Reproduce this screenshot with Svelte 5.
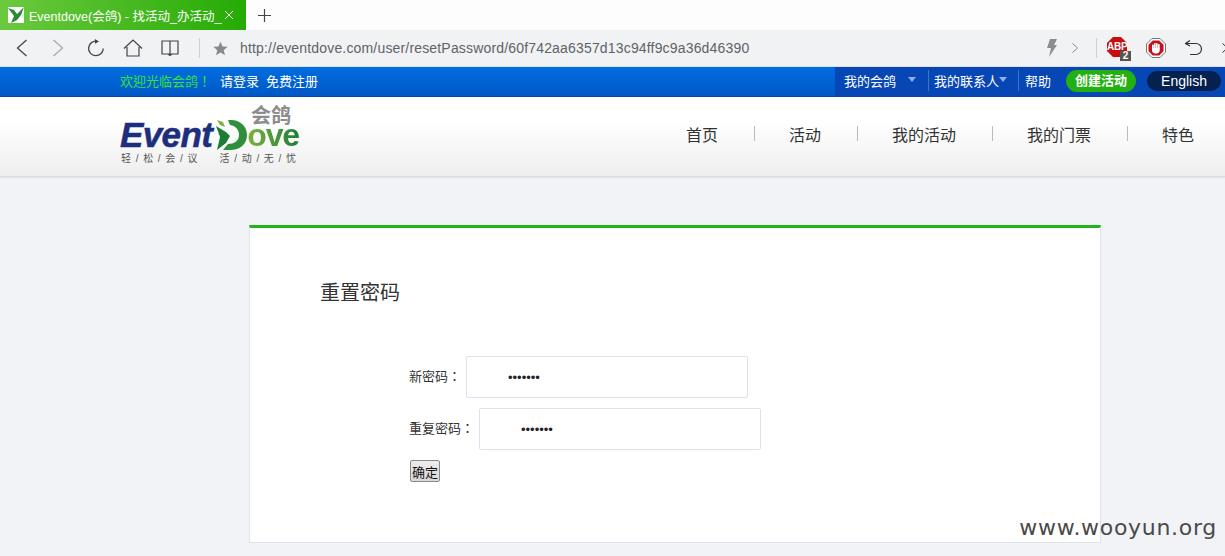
<script>
  const navItems = ['首页', '活动', '我的活动', '我的门票', '特色'];
  const url = 'http://eventdove.com/user/resetPassword/60f742aa6357d13c94ff9c9a36d46390';
</script>

<div class="page">
  <!-- browser chrome -->
  <div class="tabstrip">
    <div class="tab">
      <svg class="favicon" width="16" height="16" viewBox="0 0 16 16">
        <rect width="16" height="16" fill="#fff" />
        <path d="M0 1 L6 3 L9 7 L16 0 L13 8 L9 13 L3 16 L6 9 Z" fill="#2a8a35" />
      </svg>
      <span class="tab-title">Eventdove(会鸽) - 找活动_办活动_</span>
      <svg class="tab-close" width="10" height="10" viewBox="0 0 10 10">
        <path d="M1 1 L9 9 M9 1 L1 9" stroke="#fff" stroke-width="1" />
      </svg>
    </div>
    <svg class="newtab" width="15" height="15" viewBox="0 0 15 15">
      <path d="M7.5 1 V14 M1 7.5 H14" stroke="#444" stroke-width="1.2" />
    </svg>
  </div>

  <div class="toolbar">
    <div class="tools-left">
      <svg width="12" height="18" viewBox="0 0 12 18"><path d="M10.5 1 L1.5 9 L10.5 17" fill="none" stroke="#444" stroke-width="1.3" /></svg>
      <svg class="fwd" width="12" height="18" viewBox="0 0 12 18"><path d="M1.5 1 L10.5 9 L1.5 17" fill="none" stroke="#aaa" stroke-width="1.3" /></svg>
      <svg class="reload" width="18" height="18" viewBox="0 0 18 18"><path d="M10 2.2 A7.3 7.3 0 1 0 16.2 9.5" fill="none" stroke="#444" stroke-width="1.3" /><path d="M7.8 0 L12 2.4 L8 4.8 Z" fill="#444" /></svg>
      <svg class="home" width="20" height="18" viewBox="0 0 20 18"><path d="M1 9.5 L10 1 L19 9.5 M4 8 V17 H16 V8" fill="none" stroke="#444" stroke-width="1.2" /></svg>
      <svg class="book" width="18" height="16" viewBox="0 0 18 16"><path d="M1 1 H9 V14 H1 Z M9 1 H17 V14 H9 M7 14 L9 15.5 L11 14" fill="none" stroke="#444" stroke-width="1.2" /></svg>
      <span class="sep"></span>
      <svg class="star" width="15" height="15" viewBox="0 0 20 20"><path d="M10 1 L12.7 7.2 L19.5 7.8 L14.3 12.2 L16 19 L10 15.4 L4 19 L5.7 12.2 L0.5 7.8 L7.3 7.2 Z" fill="#8a8a8a" /></svg>
      <span class="url">{url}</span>
    </div>
    <div class="tools-right">
      <svg class="bolt" width="10" height="18" viewBox="0 0 10 18"><path d="M3 0 H10 L7 6 H10 L2 18 L4 9 H0 Z" fill="#8c8c8c" /></svg>
      <svg class="more" width="6" height="10" viewBox="0 0 6 10"><path d="M0.5 0.5 L5.5 5 L0.5 9.5" fill="none" stroke="#888" stroke-width="1" /></svg>
      <span class="sep right-sep"></span>
      <div class="abp">
        <svg width="20" height="20" viewBox="0 0 20 20"><path d="M6 0 H14 L20 6 V14 L14 20 H6 L0 14 V6 Z" fill="#c70d0d" /></svg>
        <span class="abp-text">ABP</span>
        <span class="abp-count">2</span>
      </div>
      <svg class="stop" width="20" height="20" viewBox="0 0 20 20">
        <path d="M6 0.5 H14 L19.5 6 V14 L14 19.5 H6 L0.5 14 V6 Z" fill="#fff" stroke="#777" stroke-width="1" />
        <path d="M6.8 2.5 H13.2 L17.5 6.8 V13.2 L13.2 17.5 H6.8 L2.5 13.2 V6.8 Z" fill="#c9101a" />
        <g fill="#fff">
          <rect x="6" y="6.5" width="1.7" height="6" rx="0.8" />
          <rect x="8" y="5" width="1.7" height="6" rx="0.8" />
          <rect x="10" y="5" width="1.7" height="6" rx="0.8" />
          <rect x="12" y="6" width="1.7" height="6" rx="0.8" />
          <path d="M6 10 H13.7 V12 C13.7 14 12.5 15.5 10.5 15.5 H9 C7.5 15.5 6.6 14.6 6 13 Z" />
        </g>
      </svg>
      <svg class="undo" width="18" height="16" viewBox="0 0 18 16"><path d="M1 3.5 H11 A5.5 5.5 0 0 1 11 14.5 H5" fill="none" stroke="#333" stroke-width="1.2" /><path d="M5 0.5 L0.5 3.5 L5 6" fill="none" stroke="#333" stroke-width="1.2" /></svg>
      <svg class="cut" width="6" height="10" viewBox="0 0 6 10"><path d="M0.5 0.5 L5.5 5 L0.5 9.5" fill="none" stroke="#333" stroke-width="1" /></svg>
    </div>
  </div>

  <!-- site top bar -->
  <div class="topbar">
    <div class="top-left">
      <span class="welcome">欢迎光临会鸽！</span>
      <a href="#login">请登录</a>
      <a href="#register">免费注册</a>
    </div>
    <div class="top-right">
      <a class="my" href="#my">我的会鸽<i class="caret"></i></a>
      <span class="top-sep"></span>
      <a class="contacts" href="#contacts">我的联系人<i class="caret small"></i></a>
      <span class="top-sep"></span>
      <a class="help" href="#help">帮助</a>
      <a class="create" href="#create">创建活动</a>
      <span class="english-wrap"><a class="english" href="#en">English</a></span>
    </div>
  </div>

  <!-- logo + nav -->
  <header class="site-head">
    <div class="logo">
      <span class="logo-cn">会鸽</span>
      <div class="logo-word">
        <span class="l-event">Event</span><svg class="l-d" width="31" height="32" viewBox="0 0 31 32">
          <path d="M12 1 H15 C25 1 31 8 31 16 C31 25 24 31 14 31 H7 L12 25 C18 25 23 22 23 16 C23 11 20 7 14 6 Z" fill="#2f8f3a" />
          <path d="M0 7 L10 13 L14 17 L10 24 L1 31 L4 18 Z" fill="#1c7d37" />
          <path d="M1 1 L7 3 L9 8 L4 6 Z" fill="#7db342" />
        </svg><span class="l-ove">ove</span>
      </div>
      <div class="logo-tag"><span>轻 / 松 / 会 / 议</span><span>活 / 动 / 无 / 忧</span></div>
    </div>
    <nav class="nav">
      {#each navItems as item, i}
        {#if i > 0}<span class="nav-sep"></span>{/if}
        <a href="#nav">{item}</a>
      {/each}
    </nav>
  </header>

  <main class="content">
    <section class="card">
      <h2>重置密码</h2>
      <form class="form" onsubmit={(e) => e.preventDefault()}>
        <div class="row">
          <label for="pw1">新密码：</label>
          <input id="pw1" type="password" value="1234567" />
        </div>
        <div class="row">
          <label for="pw2">重复密码：</label>
          <input id="pw2" type="password" value="1234567" />
        </div>
        <button type="submit">确定</button>
      </form>
    </section>
  </main>

  <span class="watermark">www.wooyun.org</span>
</div>

<style>
  :global(body) { margin: 0; background: #f2f3f7; }

  .page {
    position: relative;
    width: 1225px;
    height: 556px;
    overflow: hidden;
    background: #f2f3f7;
    font-family: "Liberation Sans", "Noto Sans CJK SC", sans-serif;
    text-spacing-trim: space-all;
  }

  .tabstrip { height: 30px; background: #fdfdfd; display: flex; align-items: center; }
  .tab {
    width: 246px;
    height: 30px;
    box-sizing: border-box;
    padding-left: 8px;
    display: flex;
    align-items: center;
    background: linear-gradient(90deg, #6cc93f, #25ab05);
    color: #fff;
    font-size: 12.5px;
  }
  .favicon { flex: none; }
  .tab-title { margin-left: 5px; white-space: nowrap; width: 191px; }
  .tab-close { margin-left: 4px; flex: none; }
  .newtab { margin-left: 11px; }

  .toolbar {
    height: 37px;
    box-sizing: border-box;
    background: #f1f2f4;
    border-bottom: 1px solid #dfe0e2;
    display: flex;
    align-items: center;
    justify-content: space-between;
    padding-left: 16px;
  }
  .tools-left, .tools-right { display: flex; align-items: center; }
  .fwd { margin-left: 24px; }
  .reload { margin-left: 23px; }
  .home { margin-left: 18px; }
  .book { margin-left: 18px; }
  .sep { width: 1px; height: 20px; background: #cfd0d2; }
  .tools-left .sep { margin-left: 20px; }
  .star { margin-left: 13px; }
  .url { margin-left: 12px; font-size: 14px; color: #5f6368; letter-spacing: 0.17px; white-space: nowrap; }

  .bolt { margin-right: 15px; }
  .more { margin-right: 18px; }
  .right-sep { margin-right: 10px; }
  .abp { position: relative; width: 20px; height: 20px; margin-right: 19px; margin-bottom: 3px; }
  .abp svg { display: block; }
  .abp-text {
    position: absolute;
    left: 0;
    top: 4px;
    width: 20px;
    text-align: center;
    color: #fff;
    font-size: 10px;
    font-weight: 700;
    letter-spacing: -0.2px;
    line-height: 12px;
  }
  .abp-count {
    position: absolute;
    right: -4px;
    bottom: -4px;
    width: 11px;
    height: 10px;
    background: #555;
    color: #fff;
    font-size: 10px;
    font-weight: 700;
    line-height: 10px;
    text-align: center;
  }
  .stop { margin-right: 19px; }
  .undo { margin-right: 19px; }
  .cut { margin-right: -3px; }

  .topbar {
    height: 30px;
    box-sizing: border-box;
    background: linear-gradient(#006de0, #0058c6);
    border-bottom: 1px solid #004aa8;
    display: flex;
    justify-content: space-between;
    font-size: 13px;
  }
  .topbar a { color: #fff; text-decoration: none; }
  .top-left { padding: 0 0 2px 120px; display: flex; align-items: center; gap: 7px; }
  .welcome {
    color: #36e23c;
    margin-right: 2px;
    font-family: "Liberation Sans", "Noto Sans CJK TC", sans-serif;
  }
  .top-right {
    width: 390px;
    box-sizing: border-box;
    background: #0747b5;
    padding: 0 0 2px 9px;
    display: flex;
    align-items: center;
  }
  .my { width: 84px; position: relative; flex: none; }
  .caret {
    display: block;
    position: absolute;
    top: 6px;
    border: 4px solid transparent;
    border-top: 5px solid #8fb0e6;
    border-bottom: 0;
  }
  .my .caret { left: 64px; }
  .contacts { position: relative; width: 84px; margin-left: 5px; flex: none; }
  .contacts .caret { left: 65px; }
  .top-sep { width: 1px; height: 21px; background: #3f74c9; flex: none; }
  .help { margin-left: 6px; flex: none; }
  .create {
    margin-left: 15px;
    width: 70px;
    height: 22px;
    flex: none;
    border-radius: 11px;
    background: #22b012;
    font-weight: 700;
    text-align: center;
    line-height: 22px;
  }
  .english-wrap { margin-left: 11px; display: block; flex: none; }
  .english {
    display: block;
    width: 74px;
    height: 20px;
    border-radius: 10px;
    background: #04214f;
    font-size: 14px;
    line-height: 20px;
    text-align: center;
  }

  .site-head {
    height: 80px;
    box-sizing: border-box;
    background: linear-gradient(#ffffff 30%, #eeeeee);
    border-bottom: 1px solid #dcdcdc;
    box-shadow: 0 1px 2px rgba(0, 0, 0, 0.08);
    display: flex;
    align-items: center;
    justify-content: space-between;
    padding-left: 120px;
    padding-right: 31px;
  }
  .logo { position: relative; width: 180px; height: 70px; align-self: flex-start; margin-top: 7px; }
  .logo-cn {
    position: absolute;
    right: 9px;
    top: 3px;
    font-size: 20px;
    line-height: 18px;
    font-weight: 700;
    color: #8c8c8c;
  }
  .logo-word {
    position: absolute;
    left: 0;
    top: 15px;
    display: flex;
    align-items: center;
    height: 32px;
    font-family: "Liberation Sans", sans-serif;
    font-weight: 700;
    line-height: 32px;
  }
  .l-event {
    font-size: 35px;
    letter-spacing: -0.6px;
    font-style: italic;
    color: #1c2e7d;
    -webkit-text-stroke: 0.5px #1c2e7d;
  }
  .l-d { flex: none; margin-left: 4px; }
  .l-ove {
    font-size: 32px;
    line-height: 22px;
    letter-spacing: -1.2px;
    background: linear-gradient(90deg, #7fb33a, #1d7d3a);
    -webkit-background-clip: text;
    background-clip: text;
    color: transparent;
  }
  .logo-tag {
    position: absolute;
    left: 1px;
    top: 49px;
    width: 175px;
    display: flex;
    justify-content: space-between;
    font-size: 10px;
    line-height: 12px;
    color: #555;
    word-spacing: 1.9px;
    white-space: nowrap;
  }

  .nav { display: flex; align-items: center; font-size: 16px; margin-bottom: 6px; }
  .nav a { color: #333; text-decoration: none; }
  .nav-sep { width: 1px; height: 15px; background: #bbb; margin: 0 34px 0 36px; }

  .content { display: flex; padding: 48px 0 0 249px; }
  .card {
    width: 852px;
    height: 318px;
    box-sizing: border-box;
    background: #fff;
    border: 1px solid #dfe1ec;
    border-top: 3px solid #22b41a;
    padding: 53px 0 0 70px;
  }
  h2 { margin: 0; font-size: 20px; font-weight: 400; line-height: 24px; color: #333; }
  .form { margin: 51px 0 0 89px; display: flex; flex-direction: column; align-items: flex-start; }
  .row { display: flex; align-items: center; margin-bottom: 10px; }
  label {
    font-size: 13px;
    color: #333;
    margin: 0 5px 4px 0;
    font-family: "Liberation Sans", "Noto Sans CJK TC", sans-serif;
  }
  input {
    width: 282px;
    height: 42px;
    box-sizing: border-box;
    border: 1px solid #dfe1ec;
    border-radius: 2px;
    padding: 0 0 0 41px;
    background: #fff;
    font-size: 13px;
    font-family: "Liberation Sans", sans-serif;
    color: #222;
    outline: none;
  }
  button {
    margin: 0 0 0 1px;
    width: 30px;
    height: 22px;
    padding: 0;
    box-sizing: border-box;
    border: 1px solid #8a8a8a;
    border-radius: 2px;
    background: linear-gradient(#ececec, #d8d8d8);
    font-size: 13px;
    font-family: "Liberation Sans", "Noto Sans CJK SC", sans-serif;
    color: #111;
  }

  .watermark {
    position: absolute;
    right: 8px;
    bottom: 14px;
    font-size: 22px;
    line-height: 28px;
    color: #4a4a4a;
    letter-spacing: 0.7px;
    font-family: "DejaVu Sans", sans-serif;
  }
</style>
